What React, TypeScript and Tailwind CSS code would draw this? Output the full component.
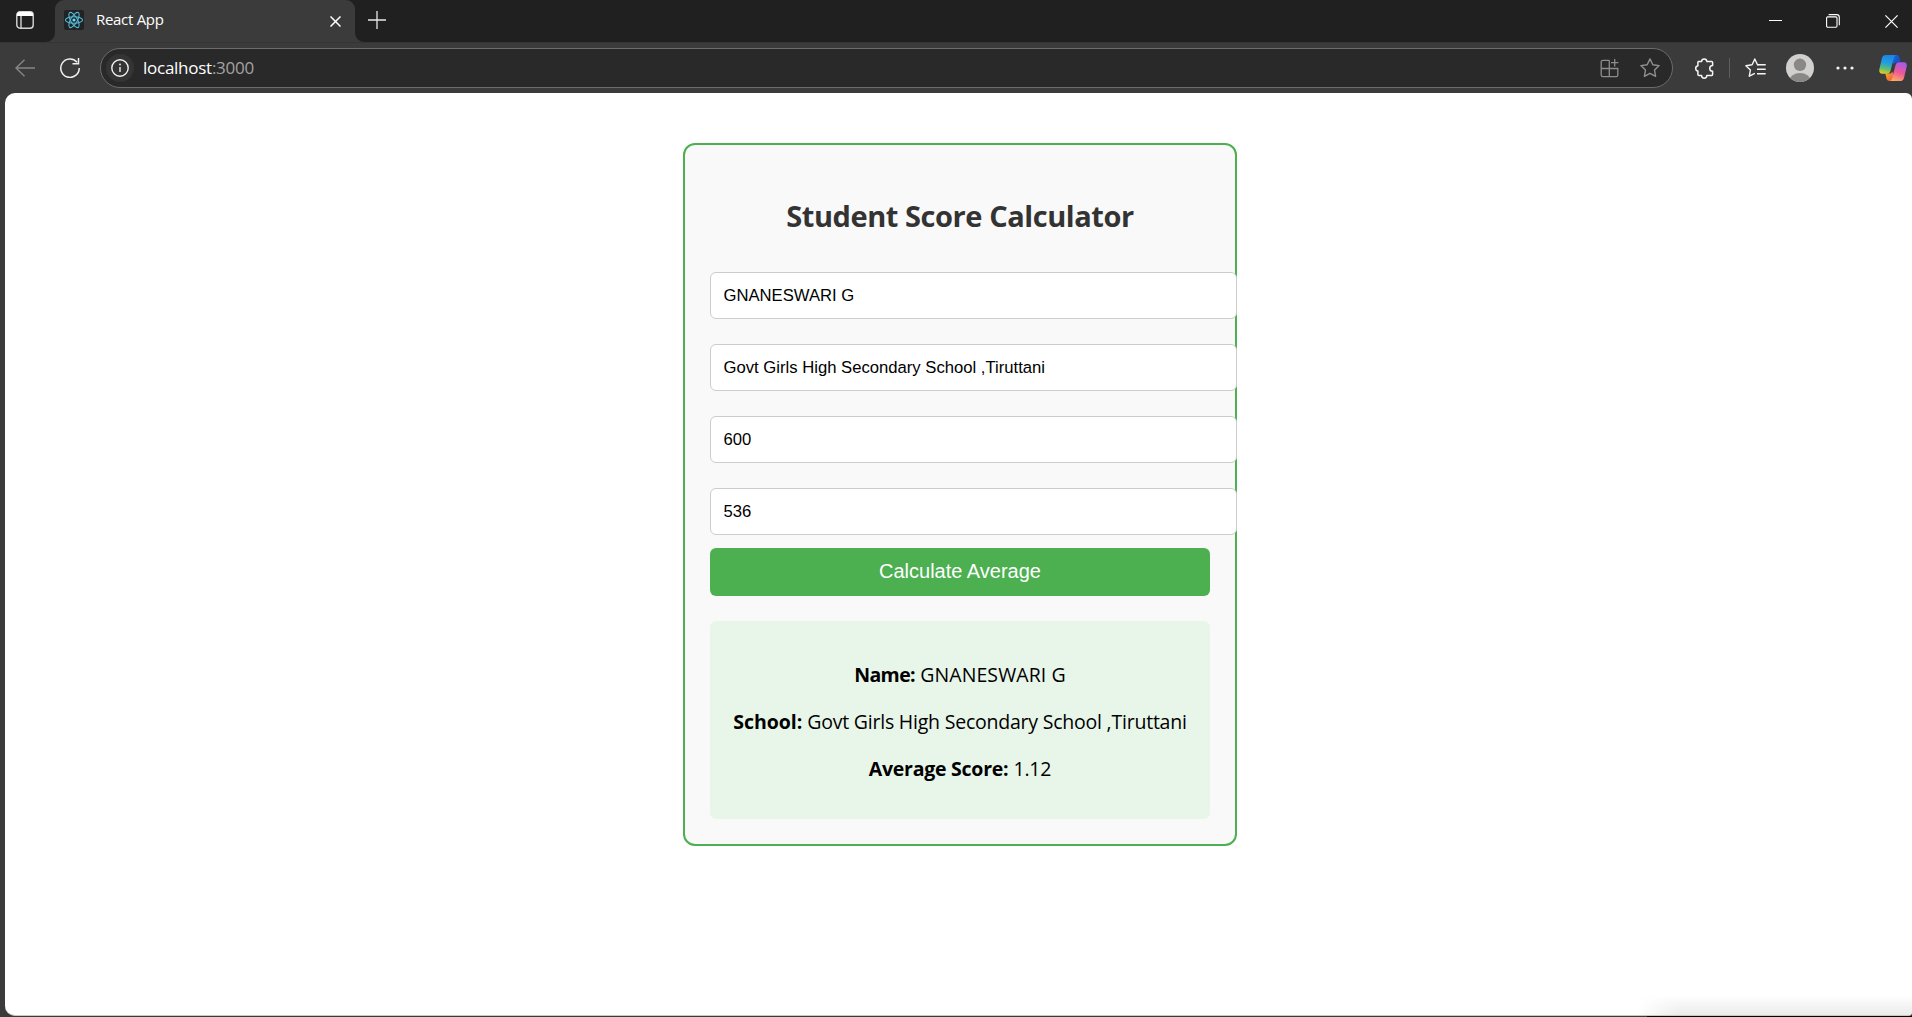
import type { ReactNode } from "react";

function TabStrip() {
  return (
    <div className="flex h-[42px] shrink-0 items-stretch bg-[#202020]">
      <div className="flex w-[55px] items-center pl-4">
        <svg width="18" height="18" viewBox="0 0 18 18" fill="none" className="-mt-0.5">
          <rect x="0.8" y="0.8" width="16.4" height="16.4" rx="3.2" stroke="#d6d6d6" strokeWidth="1.4" />
          <path d="M1 5V3.5A2.5 2.5 0 0 1 3.5 1h11A2.5 2.5 0 0 1 17 3.5V5z" fill="#fff" />
          <path d="M5 5v12" stroke="#d6d6d6" strokeWidth="1.4" />
        </svg>
      </div>

      <div className="relative flex w-[300px] items-center rounded-t-[9px] bg-[#3b3b3b] pb-[2px] pl-[9px]">
        <svg className="absolute bottom-0 -left-[9px]" width="9" height="9" viewBox="0 0 9 9">
          <path d="M9 0v9H0a9 9 0 0 0 9-9z" fill="#3b3b3b" />
        </svg>
        <svg className="absolute -right-[9px] bottom-0" width="9" height="9" viewBox="0 0 9 9">
          <path d="M0 0v9h9a9 9 0 0 1-9-9z" fill="#3b3b3b" />
        </svg>
        <span className="flex h-5 w-5 items-center justify-center rounded-[2px] bg-[#202224]">
          <svg width="20" height="20" viewBox="0 0 20 20" fill="none" stroke="#56bcd6" strokeWidth="1.05">
            <ellipse cx="10" cy="10" rx="8.6" ry="3.3" />
            <ellipse cx="10" cy="10" rx="8.6" ry="3.3" transform="rotate(60 10 10)" />
            <ellipse cx="10" cy="10" rx="8.6" ry="3.3" transform="rotate(120 10 10)" />
            <circle cx="10" cy="10" r="1.6" fill="#61dafb" stroke="none" />
          </svg>
        </span>
        <span className="ml-3 flex-1 pb-0.5 text-[15px] leading-5 tracking-[-0.3px] text-white">React App</span>
        <svg className="mt-0.5 mr-[14px]" width="11" height="11" viewBox="0 0 11 11" stroke="#fff" strokeWidth="1.5">
          <path d="M.5.5l10 10M10.5.5l-10 10" />
        </svg>
      </div>

      <div className="flex flex-1 items-center justify-between pl-[13px]">
        <svg className="-mt-[3px]" width="18" height="18" viewBox="0 0 18 18" stroke="#e8e8e8" strokeWidth="1.3">
          <path d="M0 9h18M9 0v18" />
        </svg>
        <div className="flex items-center pr-[14px]">
          <svg className="mr-11" width="13" height="14" viewBox="0 0 13 14" stroke="#fff" strokeWidth="1">
            <path d="M0 6.5h13" />
          </svg>
          <svg className="mr-[45px]" width="14" height="14" viewBox="0 0 14 14" fill="none" stroke="#fff" strokeWidth="1.1">
            <rect x="0.6" y="2.9" width="10.4" height="10.4" rx="1.2" />
            <path d="M2.6.6h8a2.7 2.7 0 0 1 2.7 2.7v8" />
          </svg>
          <svg width="13" height="13" viewBox="0 0 13 13" stroke="#fff" strokeWidth="1.2">
            <path d="M.4.4l12.2 12.2M12.6.4L.4 12.6" />
          </svg>
        </div>
      </div>
    </div>
  );
}

function CopilotIcon() {
  return (
    <svg width="28" height="26" viewBox="0 0 28 26">
      <defs>
        <linearGradient id="cpLeft" x1="0.3" y1="0" x2="0.1" y2="1">
          <stop offset="0" stopColor="#1b86e8" />
          <stop offset="0.4" stopColor="#22a0dc" />
          <stop offset="0.7" stopColor="#62bd70" />
          <stop offset="1" stopColor="#f2cf1b" />
        </linearGradient>
        <linearGradient id="cpRight" x1="0.6" y1="0" x2="0.3" y2="1">
          <stop offset="0" stopColor="#a45bea" />
          <stop offset="0.5" stopColor="#ee5798" />
          <stop offset="1" stopColor="#ffab62" />
        </linearGradient>
        <linearGradient id="cpTop" x1="0" y1="0" x2="1" y2="0.6">
          <stop offset="0" stopColor="#1a6fe0" />
          <stop offset="1" stopColor="#1749c4" />
        </linearGradient>
        <linearGradient id="cpBottom" x1="0" y1="0" x2="1" y2="1">
          <stop offset="0" stopColor="#f5b32a" />
          <stop offset="1" stopColor="#ee4a3c" />
        </linearGradient>
      </defs>
      <path d="M12 0h5.5c1.600 0 2.600.9 3 2.400l1.300 5.100h-4.200c-1.500 0-2.500.8-3 2.300z" fill="url(#cpTop)" />
      <path d="M16 26h-5.500c-1.600 0-2.600-.9-3-2.400l-1.200-5h4c1.600 0 2.600-.8 3-2.300z" fill="url(#cpBottom)" />
      <path d="M7 0H17.500c-1.500.3-2.300 1.400-2.700 3l-3.300 12.800c-.5 1.900-1.700 2.900-3.600 2.900H3.200C.9 18.700-.1 17 .3 14.600L3 3.100C3.500 1.100 4.800 0 7 0z" fill="url(#cpLeft)" />
      <path d="M21 26H10.500c1.500-.3 2.300-1.400 2.700-3l3.300-12.800c.5-1.900 1.700-2.900 3.600-2.900h4.700c2.300 0 3.300 1.700 2.900 4.100L25 22.900c-.5 2-1.800 3.100-4 3.100z" fill="url(#cpRight)" />
    </svg>
  );
}

function StarOutline() {
  return (
    <svg className="mr-3" width="20" height="20" viewBox="0 0 20 20" fill="none" stroke="#909090" strokeWidth="1.4" strokeLinejoin="round">
      <path d="M10 .9l2.800 5.800 6.300.9-4.600 4.400 1.100 6.300L10 15.300l-5.600 3 1.100-6.300L.9 7.600l6.300-.9z" />
    </svg>
  );
}

function AddressBar() {
  return (
    <div className="flex h-[51px] shrink-0 items-center border-t border-[#343434] bg-[#3b3b3b] pl-[15px]">
      <svg width="20" height="18" viewBox="0 0 20 18" fill="none" stroke="#868686" strokeWidth="1.4">
        <path d="M20 9H1M9.5.7L1 9l8.500 8.300" />
      </svg>
      <svg className="ml-[25px]" width="20" height="20" viewBox="0 0 20 20" fill="none" stroke="#f0f0f0" strokeWidth="1.5">
        <path d="M19.200 10A9.200 9.200 0 1 1 17 4.200" />
        <path d="M18.500 0v5.800h-6" />
      </svg>

      <div className="ml-5 flex h-10 w-[1573px] items-center rounded-full border border-[#6c6c6c] bg-[#292929] pl-[5px]">
        <span className="flex h-7 w-7 items-center justify-center rounded-full bg-[#343434]">
          <svg width="18" height="18" viewBox="0 0 18 18" fill="none" stroke="#f0f0f0" strokeWidth="1.4">
            <circle cx="9" cy="9" r="8.2" />
            <path d="M9 8v5" />
            <circle cx="9" cy="5.5" r="0.9" fill="#f0f0f0" stroke="none" />
          </svg>
        </span>
        <span className="ml-[9px] flex-1 text-[17px] leading-6 tracking-[-0.26px] text-white">
          localhost<span className="text-[#a3a3a3]">:3000</span>
        </span>
        <svg className="mr-[21px]" width="19" height="19" viewBox="0 0 19 19" fill="none" stroke="#8c8c8c" strokeWidth="1.3">
          <path d="M9.300 1.300H3A1.800 1.800 0 0 0 1.200 3.100v12.800A1.800 1.800 0 0 0 3 17.700h13a1.800 1.800 0 0 0 1.800-1.800V9.500H1.200M9.300 1.300v16.400" />
          <path d="M14.700 0v7.400M11 3.700h7.400" />
        </svg>
        <StarOutline />
      </div>

      <svg className="ml-[21px]" width="20" height="21" viewBox="0 0 20 21" fill="none" stroke="#f5f5f5" strokeWidth="1.5" strokeLinejoin="round">
        <path d="M4.200 3.500h3.400a2.600 2.600 0 0 1 5.200 0h4.900a.9.9 0 0 1 .9.900v3.200a2.700 2.700 0 0 0 0 5.700v3.300a1 1 0 0 1-1 1h-4.800a2.600 2.600 0 0 1-5.200 0H4.900a1 1 0 0 1-1-1v-3.500a2.700 2.700 0 0 1 0-5.300V4.400z" />
      </svg>
      <span className="ml-[15px] h-5 w-px bg-[#5e5e5e]" />
      <svg className="ml-[15px]" width="21" height="20" viewBox="0 0 21 20" fill="none" stroke="#f5f5f5" strokeWidth="1.4" strokeLinejoin="round">
        <path d="M13.500 6.900l-1-.1L9.800 1 7.100 6.800l-6.200.9 4.500 4.300-1.100 6.200L9.800 15.300" />
        <path d="M12.500 6.800h8.200M12 11.300h8.700M12 15.800h8.700" strokeWidth="1.5" />
      </svg>
      <svg className="ml-5" width="28" height="28" viewBox="0 0 28 28">
        <clipPath id="avatarClip">
          <circle cx="14" cy="14" r="14" />
        </clipPath>
        <g clipPath="url(#avatarClip)">
          <rect width="28" height="28" fill="#d2d0ce" />
          <circle cx="14" cy="10.800" r="6.200" fill="#8a8886" />
          <ellipse cx="14" cy="26.500" rx="10.500" ry="7.500" fill="#8a8886" />
        </g>
      </svg>
      <svg className="ml-[22px]" width="18" height="4" viewBox="0 0 18 4" fill="#f5f5f5">
        <circle cx="2" cy="2" r="1.600" />
        <circle cx="9" cy="2" r="1.600" />
        <circle cx="16" cy="2" r="1.600" />
      </svg>
      <span className="ml-[25px] shrink-0">
        <CopilotIcon />
      </span>
    </div>
  );
}

const fieldClass =
  "block h-[47px] w-[527px] rounded-[6px] border border-[#ccc] bg-white pl-[12.5px] font-['Liberation_Sans',Arial,sans-serif] text-[16.67px] text-black outline-none";

function ResultLine({ children }: { children: ReactNode }) {
  return <p className="h-[27px] text-center text-[19.5px] leading-[27px] whitespace-nowrap text-black">{children}</p>;
}

function ScoreCard() {
  return (
    <main className="mt-[50px] ml-[678px] h-[703px] w-[554px] rounded-[12px] border-2 border-[#4caf50] bg-[#f9f9f9] px-[25px] pt-[51px]">
      <h2 className="h-10 text-center text-[29px] leading-10 font-bold tracking-[-0.43px] text-[#333]">
        Student Score Calculator
      </h2>
      <div className="mt-9 flex flex-col gap-[25px]">
        <input className={fieldClass} defaultValue="GNANESWARI G" />
        <input className={fieldClass} defaultValue="Govt Girls High Secondary School ,Tiruttani" />
        <input className={fieldClass} defaultValue="600" />
        <input className={fieldClass} defaultValue="536" />
      </div>
      <button className="mt-[13px] flex h-12 w-[500px] items-center justify-center rounded-[6px] bg-[#4caf50] pb-0.5 font-['Liberation_Sans',Arial,sans-serif] text-[20px] text-white">
        Calculate Average
      </button>
      <section className="mt-[25px] flex h-[198px] w-[500px] flex-col gap-5 rounded-[6px] bg-[#e8f5e9] pt-10">
        <ResultLine>
          <strong className="tracking-[-0.6px]">Name:</strong> <span className="tracking-[0.1px]">GNANESWARI G</span>
        </ResultLine>
        <ResultLine>
          <strong className="tracking-[-0.05px]">School:</strong>{" "}
          <span className="tracking-[-0.22px]">Govt Girls High Secondary School ,Tiruttani</span>
        </ResultLine>
        <ResultLine>
          <strong className="tracking-[-0.25px]">Average Score:</strong> <span className="tracking-[-0.2px]">1.12</span>
        </ResultLine>
      </section>
    </main>
  );
}

export default function App() {
  return (
    <div className="flex h-[1017px] w-[1912px] flex-col overflow-hidden bg-[#3b3b3b] font-['Open_Sans','Noto_Sans',sans-serif]">
      <TabStrip />
      <AddressBar />
      <div className="relative ml-[5px] flex h-[923px] shrink-0 flex-col overflow-hidden rounded-[10px] rounded-tr-[6px] rounded-br-[4px] border-b border-[#c8c8c8] bg-white">
        <ScoreCard />
        <div className="absolute right-0 bottom-0 h-5 w-[275px] bg-linear-to-t from-[#ebebeb] to-transparent mask-l-from-85%" />
      </div>
      <div className="ml-[1647px] h-px w-[265px] shrink-0 bg-[#050505]" />
    </div>
  );
}
